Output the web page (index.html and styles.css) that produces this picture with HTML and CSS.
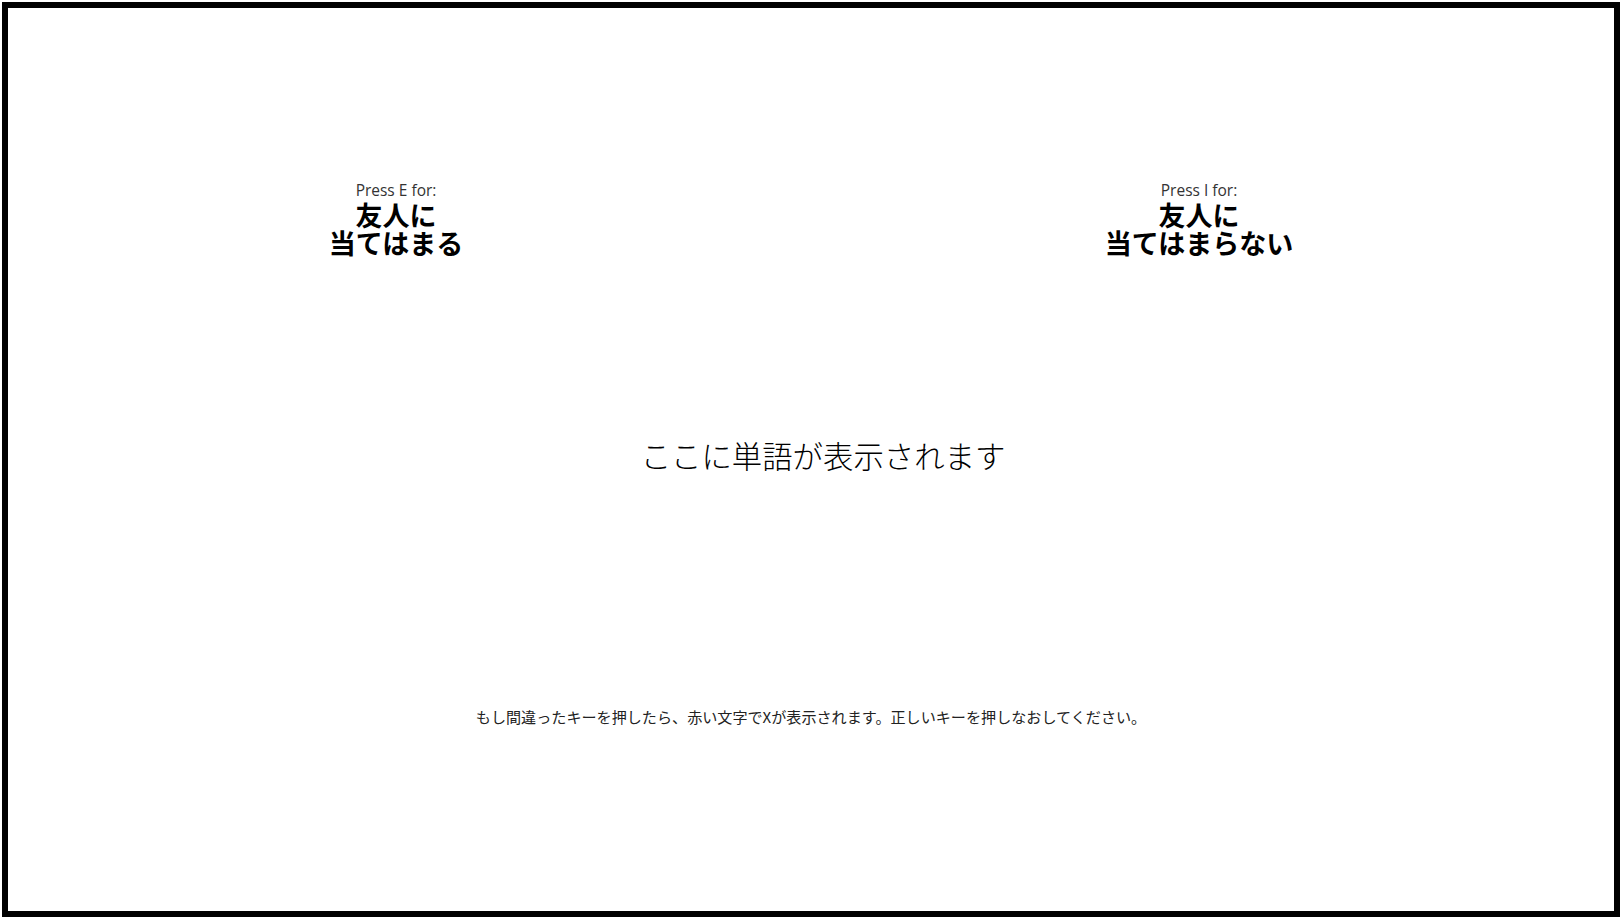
FILE: index.html
```html
<!DOCTYPE html>
<html lang="ja">
<head>
<meta charset="utf-8">
<title>IAT</title>
<link rel="stylesheet" href="styles.css">
</head>
<body>
<div class="frame">
  <div class="header">
    <div class="cat">
      <div class="press">Press E for:</div>
      <div class="label">友人に<br>当てはまる</div>
    </div>
    <div class="cat">
      <div class="press">Press I for:</div>
      <div class="label">友人に<br>当てはまらない</div>
    </div>
  </div>
  <div class="stimulus">ここに単語が表示されます</div>
  <div class="note">もし間違ったキーを押したら、赤い文字でXが表示されます。正しいキーを押しなおしてください。</div>
</div>
</body>
</html>
```
FILE: styles.css
```css
html, body {
  margin: 0;
  padding: 0;
  background: #ffffff;
}
body {
  font-family: "Open Sans", "Noto Sans CJK JP", sans-serif;
  color: #000;
}
.frame {
  margin: 2px;
  height: 915px;
  box-sizing: border-box;
  border: 6px solid #000;
  display: flex;
  flex-direction: column;
}
.header {
  display: grid;
  grid-template-columns: 776px 1fr;
  padding-top: 172px;
}
.cat {
  text-align: center;
}
.press {
  font-family: "Open Sans", sans-serif;
  font-size: 15.5px;
  line-height: 21px;
  color: #333;
}
.label {
  font-family: "Noto Sans CJK JP", sans-serif;
  font-weight: 700;
  font-size: 27px;
  line-height: 27.5px;
  color: #000;
}
.stimulus {
  margin-top: 179px;
  padding-left: 24px;
  text-align: center;
  font-family: "Noto Sans CJK JP", sans-serif;
  font-weight: 300;
  font-size: 30.4px;
  line-height: 40px;
  color: #000;
}
.note {
  margin-top: 231px;
  text-align: center;
  font-family: "Noto Sans CJK JP", sans-serif;
  font-size: 15.1px;
  line-height: 20px;
  color: #222;
}
```
